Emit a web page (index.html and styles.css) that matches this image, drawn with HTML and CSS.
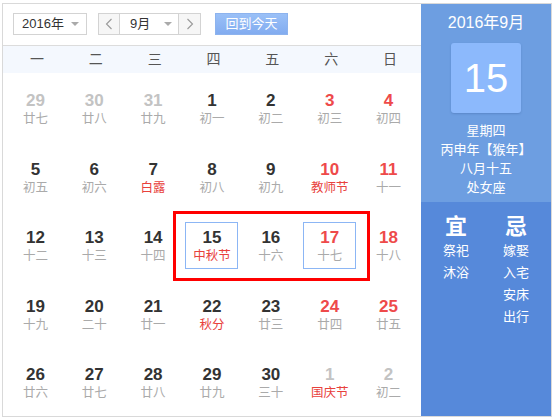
FILE: index.html
```html
<!DOCTYPE html>
<html lang="zh">
<head>
<meta charset="utf-8">
<link rel="stylesheet" href="styles.css">
</head>
<body>
<div class="widget">
  <div class="main">
    <div class="toolbar">
      <div class="select year"><span>2016年</span><i class="tri"></i></div>
      <div class="monthnav">
        <div class="arrow"><svg width="8" height="12" viewBox="0 0 8 12"><polyline points="6.5,1 1.5,6 6.5,11" fill="none" stroke="#999" stroke-width="1.1"/></svg></div>
        <div class="select month"><span>9月</span><i class="tri"></i></div>
        <div class="arrow"><svg width="8" height="12" viewBox="0 0 8 12"><polyline points="1.5,1 6.5,6 1.5,11" fill="none" stroke="#999" stroke-width="1.1"/></svg></div>
      </div>
      <div class="today">回到今天</div>
    </div>
    <div class="week">
      <span>一</span><span>二</span><span>三</span><span>四</span><span>五</span><span>六</span><span>日</span>
    </div>
    <div class="grid">
      <div class="cell other"><div class="day"><b>29</b><em>廿七</em></div></div>
      <div class="cell other"><div class="day"><b>30</b><em>廿八</em></div></div>
      <div class="cell other"><div class="day"><b>31</b><em>廿九</em></div></div>
      <div class="cell"><div class="day"><b>1</b><em>初一</em></div></div>
      <div class="cell"><div class="day"><b>2</b><em>初二</em></div></div>
      <div class="cell wkd"><div class="day"><b>3</b><em>初三</em></div></div>
      <div class="cell wkd"><div class="day"><b>4</b><em>初四</em></div></div>

      <div class="cell"><div class="day"><b>5</b><em>初五</em></div></div>
      <div class="cell"><div class="day"><b>6</b><em>初六</em></div></div>
      <div class="cell"><div class="day"><b>7</b><em class="fest">白露</em></div></div>
      <div class="cell"><div class="day"><b>8</b><em>初八</em></div></div>
      <div class="cell"><div class="day"><b>9</b><em>初九</em></div></div>
      <div class="cell wkd"><div class="day"><b>10</b><em class="fest">教师节</em></div></div>
      <div class="cell wkd"><div class="day"><b>11</b><em>十一</em></div></div>

      <div class="cell"><div class="day"><b>12</b><em>十二</em></div></div>
      <div class="cell"><div class="day"><b>13</b><em>十三</em></div></div>
      <div class="cell"><div class="day"><b>14</b><em>十四</em></div></div>
      <div class="cell"><div class="day marked"><b>15</b><em class="fest">中秋节</em></div></div>
      <div class="cell"><div class="day"><b>16</b><em>十六</em></div></div>
      <div class="cell wkd"><div class="day marked"><b>17</b><em>十七</em></div></div>
      <div class="cell wkd"><div class="day"><b>18</b><em>十八</em></div></div>

      <div class="cell"><div class="day"><b>19</b><em>十九</em></div></div>
      <div class="cell"><div class="day"><b>20</b><em>二十</em></div></div>
      <div class="cell"><div class="day"><b>21</b><em>廿一</em></div></div>
      <div class="cell"><div class="day"><b>22</b><em class="fest">秋分</em></div></div>
      <div class="cell"><div class="day"><b>23</b><em>廿三</em></div></div>
      <div class="cell wkd"><div class="day"><b>24</b><em>廿四</em></div></div>
      <div class="cell wkd"><div class="day"><b>25</b><em>廿五</em></div></div>

      <div class="cell"><div class="day"><b>26</b><em>廿六</em></div></div>
      <div class="cell"><div class="day"><b>27</b><em>廿七</em></div></div>
      <div class="cell"><div class="day"><b>28</b><em>廿八</em></div></div>
      <div class="cell"><div class="day"><b>29</b><em>廿九</em></div></div>
      <div class="cell"><div class="day"><b>30</b><em>三十</em></div></div>
      <div class="cell other"><div class="day"><b>1</b><em class="fest">国庆节</em></div></div>
      <div class="cell other"><div class="day"><b>2</b><em>初二</em></div></div>
    </div>
  </div>
  <div class="side">
    <div class="side-top">
      <div class="ym">2016年9月</div>
      <div class="bigday">15</div>
      <div class="info">
        <div>星期四</div>
        <div>丙申年【猴年】</div>
        <div>八月十五</div>
        <div>处女座</div>
      </div>
    </div>
    <div class="side-bottom">
      <div class="col">
        <div class="head">宜</div>
        <div>祭祀</div>
        <div>沐浴</div>
      </div>
      <div class="col">
        <div class="head">忌</div>
        <div>嫁娶</div>
        <div>入宅</div>
        <div>安床</div>
        <div>出行</div>
      </div>
    </div>
  </div>
  <div class="sel-frame"></div>
</div>
</body>
</html>
```

FILE: styles.css
```css
html, body {
  margin: 0;
  padding: 0;
  background: #fff;
}
body {
  font-family: "Liberation Sans", "Noto Sans CJK SC", sans-serif;
  font-size: 13px;
  color: #333;
}
.widget {
  position: relative;
  margin: 3px 0 0 2px;
  width: 550px;
  height: 414px;
  box-sizing: border-box;
  border: 1px solid #d9d9d9;
  display: flex;
}
.main {
  width: 418px;
  display: flex;
  flex-direction: column;
}
.toolbar {
  height: 41px;
  border-bottom: 1px solid #dcdcdc;
  display: flex;
  align-items: flex-start;
  padding: 9px 0 0 10px;
  box-sizing: content-box;
  height: 32px;
}
.select {
  height: 22px;
  box-sizing: border-box;
  border: 1px solid #d3d3d3;
  display: flex;
  align-items: center;
  justify-content: space-between;
  font-size: 13px;
  color: #333;
  background: #fff;
}
.select span { line-height: 20px; }
.year {
  width: 74px;
  padding: 0 7px 0 8px;
}
.tri {
  width: 0;
  height: 0;
  border-left: 4px solid transparent;
  border-right: 4px solid transparent;
  border-top: 4px solid #aaa;
}
.monthnav {
  margin-left: 11px;
  display: flex;
  height: 22px;
  border: 1px solid #d3d3d3;
  box-sizing: border-box;
}
.arrow {
  width: 20px;
  display: flex;
  align-items: center;
  justify-content: center;
  background: #f6f6f6;
}
.monthnav .arrow:last-child { width: 21px; }
.month {
  width: 60px;
  height: 20px;
  border-top: 0;
  border-bottom: 0;
  padding: 0 6px 0 10px;
}
.today {
  margin-left: 14px;
  width: 73px;
  height: 22px;
  box-sizing: border-box;
  border: 1px solid #8db3ee;
  background: linear-gradient(#9ac0f7, #82acf0);
  color: #fff;
  font-size: 13px;
  line-height: 20px;
  text-align: center;
}
.week {
  height: 27px;
  background: #f4f8fe;
  display: grid;
  grid-template-columns: repeat(7, 1fr);
  padding: 0 3px;
  align-items: center;
  font-size: 14px;
  color: #555;
  text-align: center;
}
.week span { padding-left: 3px; line-height: 27px; }
.grid {
  flex: 1;
  display: grid;
  grid-template-columns: repeat(7, 1fr);
  grid-template-rows: repeat(5, 1fr);
  padding: 0 3px;
}
.cell {
  display: flex;
  justify-content: center;
  padding-top: 12px;
}
.day {
  width: 53px;
  height: 47px;
  box-sizing: border-box;
  border: 1px solid transparent;
  padding-top: 5px;
  display: flex;
  flex-direction: column;
  align-items: center;
}
.day.marked { border-color: #8cb6f5; }
.day b {
  font-size: 17px;
  line-height: 20px;
  font-weight: bold;
  color: #333;
}
.day em {
  font-style: normal;
  font-size: 12.5px;
  line-height: 16px;
  color: #aaa;
  white-space: nowrap;
}
.day em.fest { color: #e8413c; }
.wkd .day b { color: #ee4a4a; }
.other .day b { color: #c3c3c3; }
.side {
  width: 130px;
  display: flex;
  flex-direction: column;
  color: #fff;
}
.side-top {
  height: 198px;
  background: #6d9ee1;
  display: flex;
  flex-direction: column;
  align-items: center;
  padding-top: 9px;
  box-sizing: border-box;
}
.ym {
  font-size: 16px;
  line-height: 20px;
}
.bigday {
  margin-top: 10px;
  width: 70px;
  height: 70px;
  border-radius: 3px;
  background: #8cb9fc;
  box-shadow: 0 1px 2px rgba(40, 70, 130, 0.25);
  font-size: 40px;
  line-height: 70px;
  text-align: center;
}
.info {
  margin-top: 8px;
  text-align: center;
  font-size: 13px;
  line-height: 19px;
}
.side-bottom {
  flex: 1;
  background: #5689da;
  display: grid;
  grid-template-columns: 1fr 1fr;
  padding: 12px 5px 0;
  align-items: start;
}
.col {
  display: flex;
  flex-direction: column;
  align-items: center;
  font-size: 13px;
  line-height: 22px;
}
.col .head {
  font-size: 22px;
  font-weight: bold;
  line-height: 26px;
  margin-bottom: 0;
}
.sel-frame {
  position: absolute;
  left: 170px;
  top: 207px;
  width: 197px;
  height: 70px;
  box-sizing: border-box;
  border: 3px solid #ff0000;
}
```
